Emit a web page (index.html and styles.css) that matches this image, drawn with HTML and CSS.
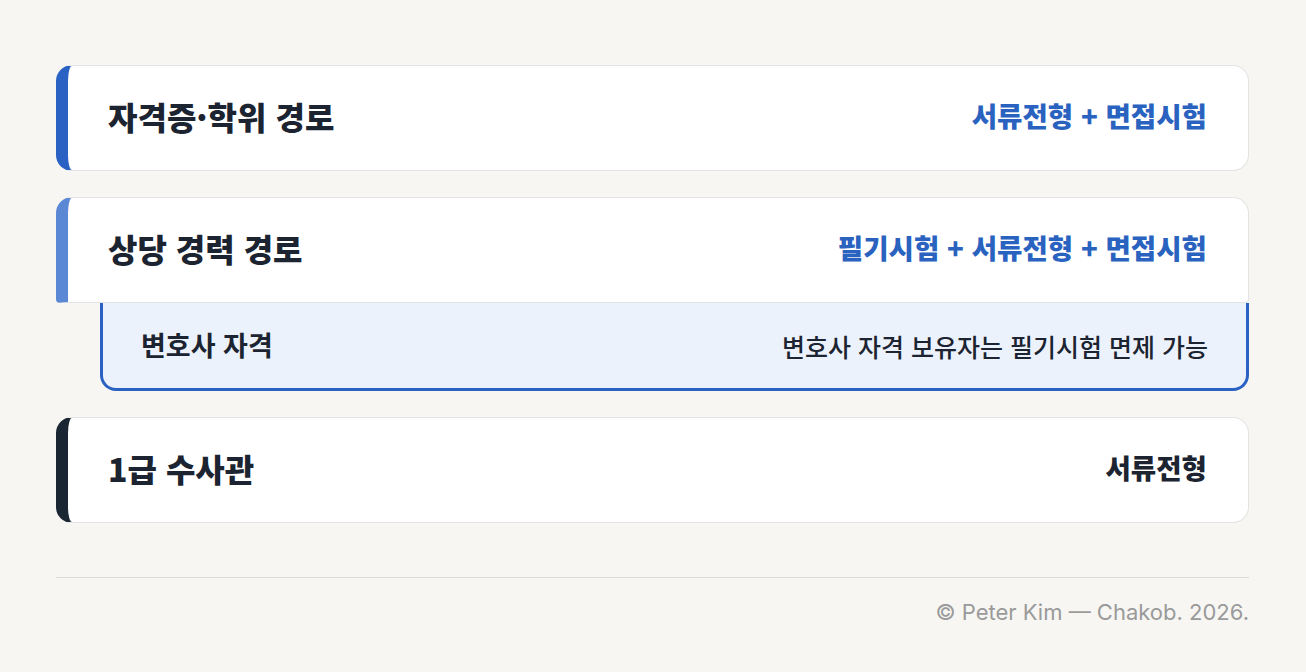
FILE: index.html
```html
<!DOCTYPE html>
<html lang="ko">
<head>
<meta charset="utf-8">
<title>경로</title>
<link rel="stylesheet" href="styles.css">
</head>
<body>
<main class="wrap">
  <section class="route route--primary">
    <h2 class="route-title">자격증·학위 경로</h2>
    <span class="route-method">서류전형 + 면접시험</span>
  </section>
  <div class="group">
    <section class="route route--secondary route--open">
      <h2 class="route-title">상당 경력 경로</h2>
      <span class="route-method">필기시험 + 서류전형 + 면접시험</span>
    </section>
    <div class="detail">
      <span class="detail-name">변호사 자격</span>
      <span class="detail-note">변호사 자격 보유자는 필기시험 면제 가능</span>
    </div>
  </div>
  <section class="route route--dark">
    <h2 class="route-title">1급 수사관</h2>
    <span class="route-method route-method--dark">서류전형</span>
  </section>
  <footer class="footer">© Peter Kim — Chakob. 2026.</footer>
</main>
</body>
</html>
```
FILE: styles.css
```css
* { box-sizing: border-box; }
html, body { margin: 0; padding: 0; }
body {
  background: #f7f6f3;
  font-family: "Noto Sans CJK KR", "Noto Sans", sans-serif;
  color: #1b2430;
}
.wrap {
  width: 1193px;
  margin-left: 56px;
  padding-top: 65px;
  display: flex;
  flex-direction: column;
  gap: 26px;
}
.route {
  height: 106px;
  display: flex;
  align-items: center;
  justify-content: space-between;
  padding: 0 41px 0 40px;
  background: #fff;
  border: 1px solid #e3e3e3;
  border-left: 12px solid #2a62c4;
  border-radius: 16px;
}
.route--secondary { border-left-color: #5b88d5; }
.route--dark { border-left-color: #1b2633; }
.route--open { border-radius: 16px 16px 4px 4px; }
.route-title {
  margin: 0;
  font-size: 32px;
  line-height: 1.2;
  font-weight: 800;
  color: #1b2430;
  position: relative;
  top: -2px;
}
.route-method {
  font-size: 27.6px;
  line-height: 1.2;
  font-weight: 800;
  color: #2a62c0;
  position: relative;
  top: -2px;
}
.route-method--dark { color: #1b2430; }
.group { display: flex; flex-direction: column; }
.detail {
  margin-left: 44px;
  height: 88px;
  display: flex;
  align-items: center;
  justify-content: space-between;
  padding: 0 38px;
  background: #ecf2fb;
  border: 3px solid #2a62c4;
  border-top: 0;
  border-radius: 0 0 16px 16px;
}
.detail-name {
  font-size: 27px;
  line-height: 1.2;
  font-weight: 700;
  color: #1b2430;
}
.detail-note {
  font-size: 25px;
  line-height: 1.2;
  font-weight: 500;
  color: #1b2430;
}
.footer {
  margin-top: 28px;
  border-top: 1px solid #dcdbd8;
  padding-top: 20px;
  text-align: right;
  font-family: Inter, "Noto Sans", sans-serif;
  font-size: 22px;
  line-height: 28px;
  color: #9a9a9a;
}
```
